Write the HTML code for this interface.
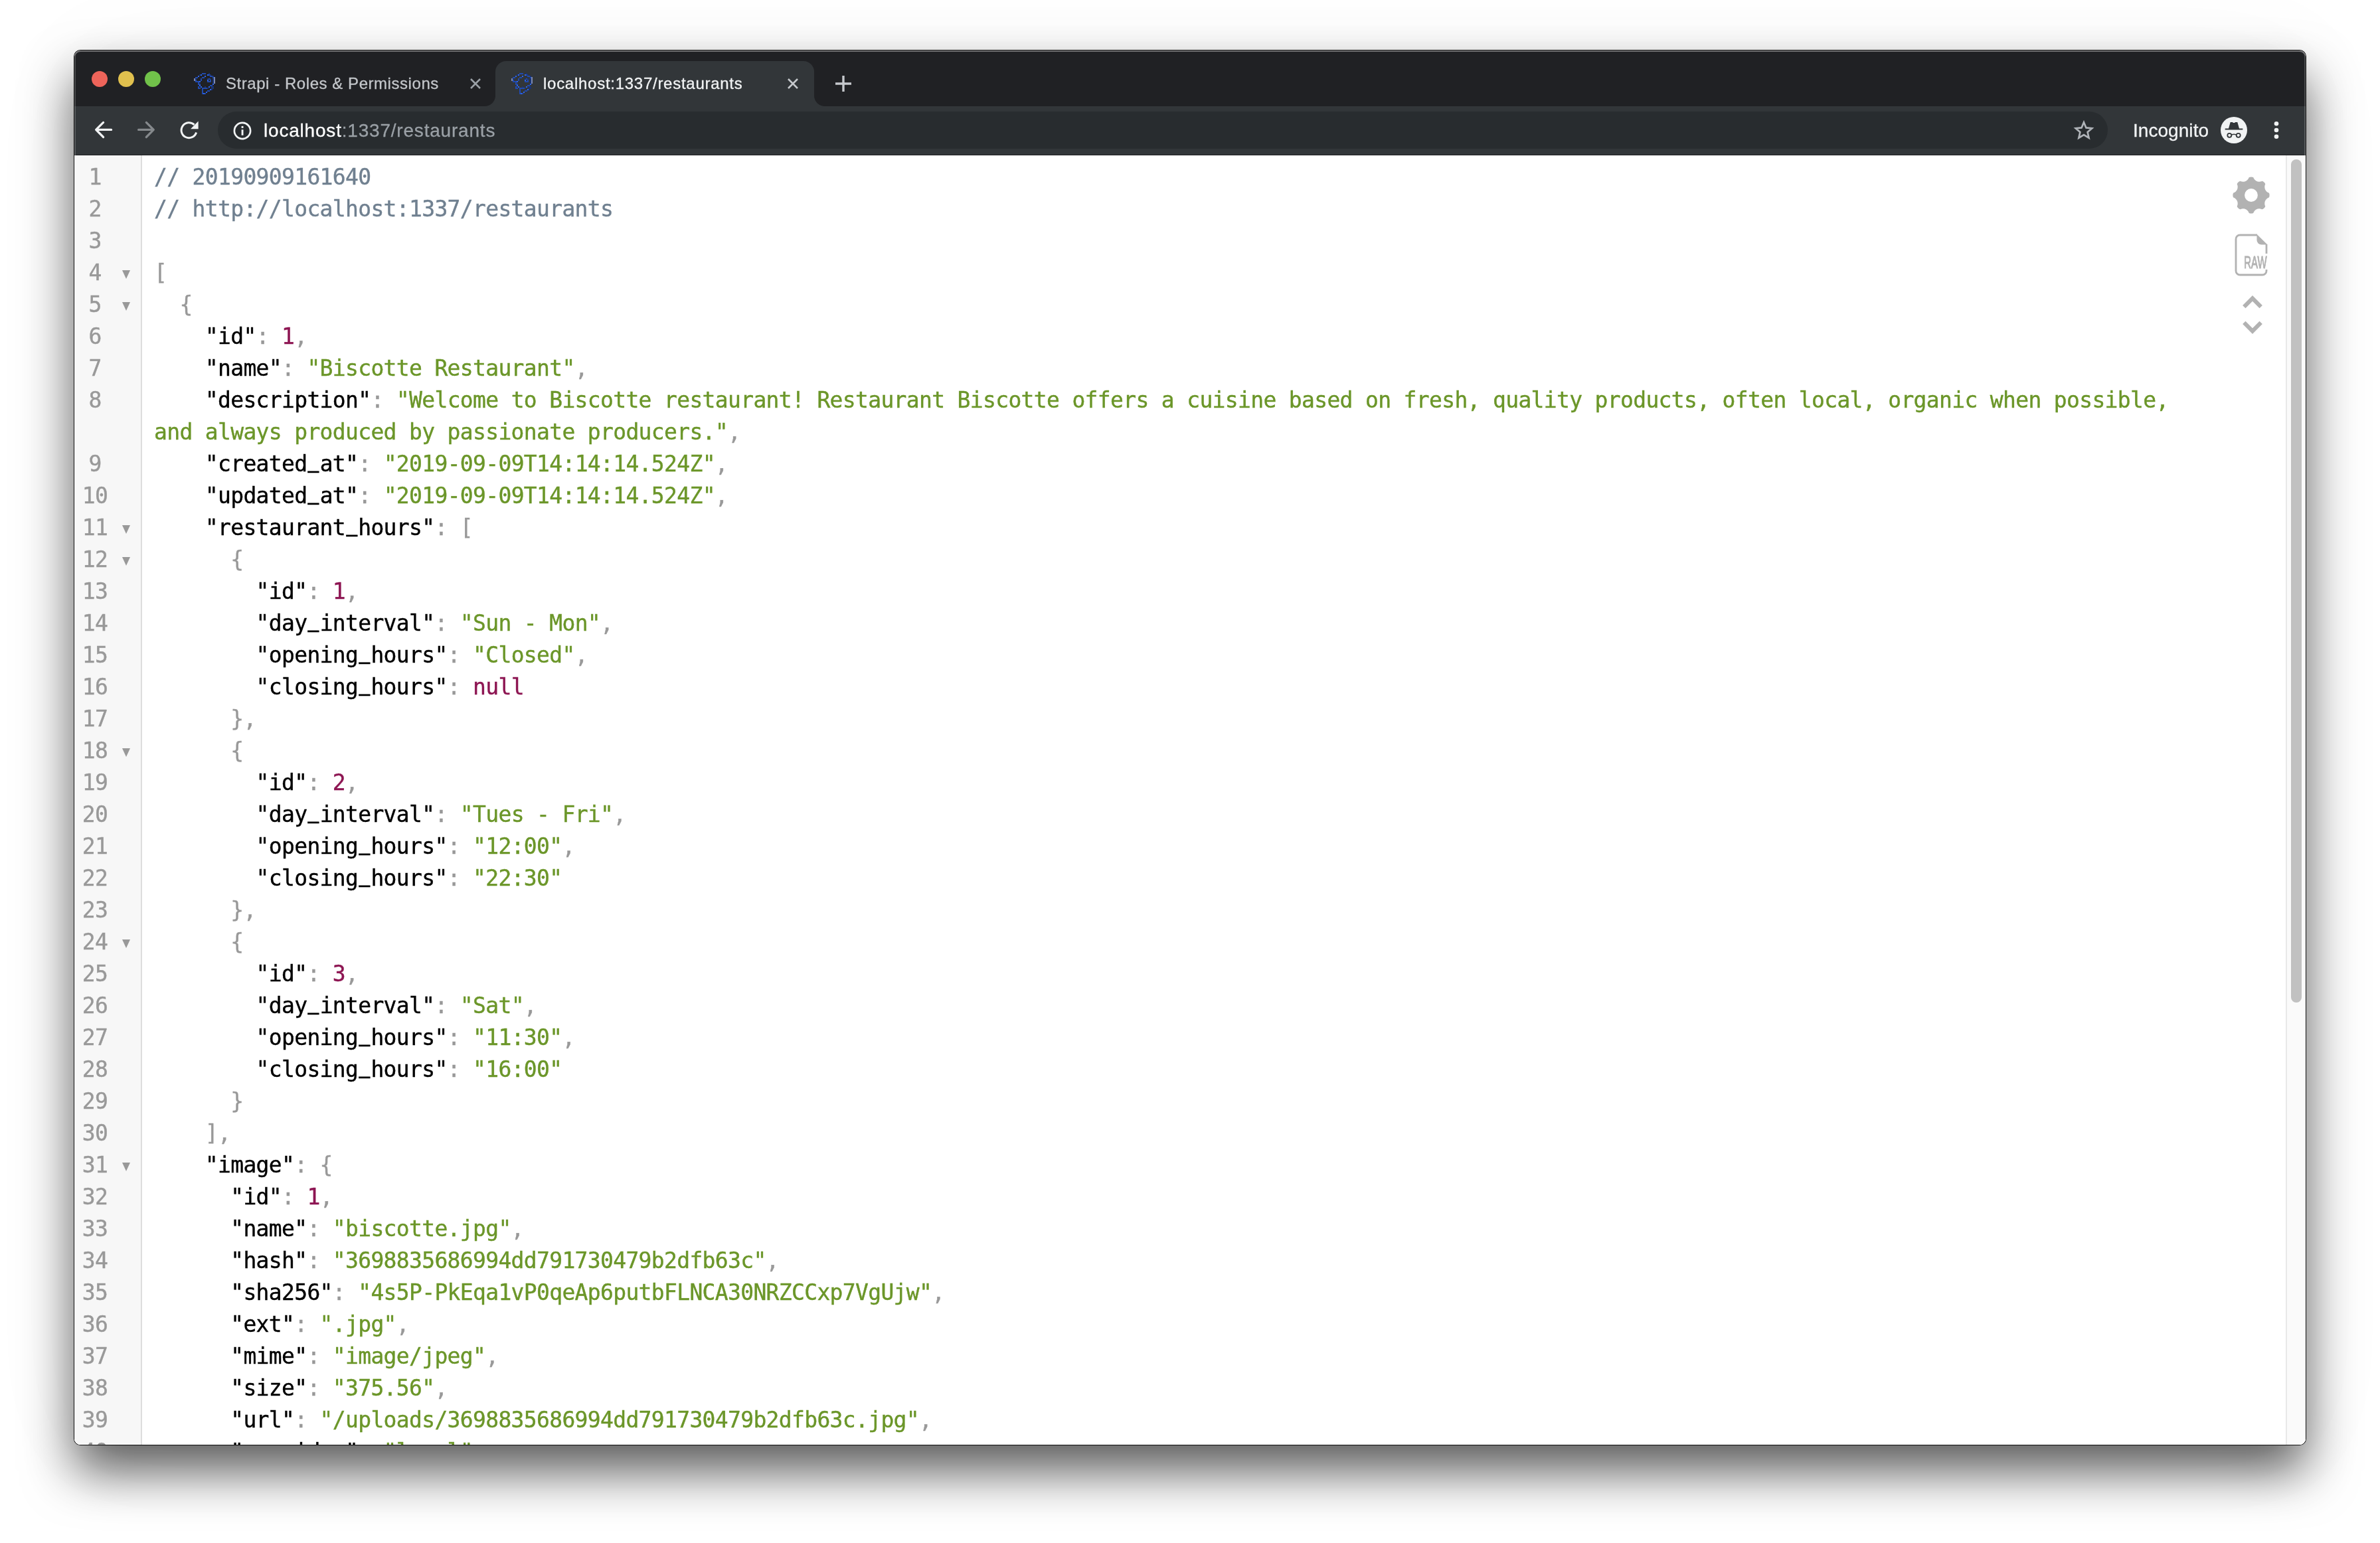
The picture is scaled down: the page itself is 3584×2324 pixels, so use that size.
<!DOCTYPE html>
<html lang="en">
<head>
<meta charset="utf-8">
<title>localhost:1337/restaurants</title>
<style>
html,body{margin:0;padding:0;}
body{width:3584px;height:2324px;background:#fff;position:relative;overflow:hidden;font-family:"Liberation Sans",sans-serif;}
#win{position:absolute;left:112px;top:76px;width:3360px;height:2100px;border-radius:9px;background:#fff;
  box-shadow:0 0 0 1px rgba(0,0,0,.9),0 40px 76px 0 rgba(0,0,0,.638),0 0 170px rgba(0,0,0,.035);}
#clip{position:absolute;left:0;top:0;right:0;bottom:0;border-radius:9px;overflow:hidden;will-change:transform;}
#clip:after{content:"";position:absolute;left:0;top:0;right:0;bottom:0;border-radius:9px;pointer-events:none;
  box-shadow:inset 0 2px 0 rgba(255,255,255,.34),inset 2px 0 0 rgba(255,255,255,.18),inset -2px 0 0 rgba(255,255,255,.18);}
#tabbar{position:absolute;left:0;top:0;width:3360px;height:84px;background:#202124;}
#toolbar{position:absolute;left:0;top:84px;width:3360px;height:74px;background:#323639;box-shadow:inset 0 -1px 0 #1c1d1f;}
.tl{position:absolute;top:31px;width:24px;height:24px;border-radius:50%;}
.tab{position:absolute;top:16px;height:68px;}
.tab.active{background:#323639;border-radius:16px 16px 0 0;}
.tab.active:before,.tab.active:after{content:"";position:absolute;bottom:0;width:16px;height:16px;}
.tab.active:before{left:-16px;background:radial-gradient(circle at 0 0,transparent 15.5px,#323639 16.5px);}
.tab.active:after{right:-16px;background:radial-gradient(circle at 100% 0,transparent 15.5px,#323639 16.5px);}
.tab .fav{position:absolute;left:24px;top:18px;width:32px;height:32px;}
.tab .ttl{position:absolute;left:72px;top:14px;-webkit-text-stroke:.3px;font-size:24px;line-height:40px;white-space:nowrap;}
.tab .cls{position:absolute;top:26px;width:16px;height:16px;}
svg{display:block;overflow:visible;}
#omni{position:absolute;left:216px;top:8px;width:2846px;height:56px;border-radius:28px;background:#282c2f;}
#url{position:absolute;left:69px;top:9px;-webkit-text-stroke:.3px;font-size:28px;line-height:40px;color:#9aa0a6;white-space:nowrap;letter-spacing:.8px;}
#url b{font-weight:normal;color:#fff;}
.ico{position:absolute;}
#incog{position:absolute;left:3100px;letter-spacing:.05px;top:17px;-webkit-text-stroke:.3px;font-size:28px;line-height:40px;color:#f1f3f4;white-space:nowrap;}
#page{position:absolute;left:0;top:158px;width:3360px;height:1942px;background:#fff;overflow:hidden;}
#gutter{position:absolute;left:0;top:0;width:100px;height:100%;background:#f7f7f7;border-right:2px solid #ddd;}
#code{position:absolute;left:0;top:9px;width:3330px;font-family:"DejaVu Sans Mono","Liberation Mono",monospace;font-size:33px;line-height:48px;letter-spacing:-0.668px;-webkit-text-stroke:.4px;}
.row{position:relative;height:48px;white-space:pre;}
.g{position:absolute;left:0;top:0;width:100px;height:48px;color:#999;}
.ln{position:absolute;left:0;width:62px;text-align:center;}
.fd{position:absolute;left:72.3px;top:20px;width:0;height:0;border-left:6.6px solid transparent;border-right:6.6px solid transparent;border-top:13px solid #999;}
.t{position:absolute;left:120px;top:0;}
.u{display:inline-block;transform-origin:50% 100%;transform:translateY(-3.2px) scale(.86,1.6);}
.p{color:#000}.s{color:#6b9629}.n{color:#8d1552}.x{color:#999}.c{color:#708090}
#sbar{position:absolute;right:0;top:0;width:30px;height:100%;background:#fafafa;border-left:2px solid #e8e8e8;box-sizing:border-box;}
#thumb{position:absolute;left:6px;top:6px;width:16px;height:1270px;border-radius:8px;background:#c1c1c1;}
</style>
</head>
<body>
<div id="win"><div id="clip">
  <div id="tabbar">
    <div class="tl" style="left:26px;background:#ee645a;"></div>
    <div class="tl" style="left:66px;background:#e0c04e;"></div>
    <div class="tl" style="left:106px;background:#71c24a;"></div>

    <div class="tab" style="left:156px;width:478px;">
      <svg class="fav" viewBox="0 0 16 16" shape-rendering="crispEdges"><rect x="6" y="0" width="1" height="1" fill="#214aae"/><rect x="7" y="0" width="1" height="1" fill="#214aae"/><rect x="8" y="0" width="1" height="1" fill="#214aae"/><rect x="11" y="0" width="1" height="1" fill="#1b3370"/><rect x="4" y="1" width="1" height="1" fill="#1b3370"/><rect x="5" y="1" width="1" height="1" fill="#2c65ee"/><rect x="10" y="1" width="1" height="1" fill="#2c65ee"/><rect x="11" y="1" width="1" height="1" fill="#214aae"/><rect x="12" y="1" width="1" height="1" fill="#1b3370"/><rect x="3" y="2" width="1" height="1" fill="#2c65ee"/><rect x="8" y="2" width="1" height="1" fill="#2c65ee"/><rect x="12" y="2" width="1" height="1" fill="#214aae"/><rect x="13" y="2" width="1" height="1" fill="#214aae"/><rect x="14" y="2" width="1" height="1" fill="#1b3370"/><rect x="1" y="3" width="1" height="1" fill="#214aae"/><rect x="2" y="3" width="1" height="1" fill="#214aae"/><rect x="6" y="3" width="1" height="1" fill="#214aae"/><rect x="7" y="3" width="1" height="1" fill="#214aae"/><rect x="14" y="3" width="1" height="1" fill="#214aae"/><rect x="15" y="3" width="1" height="1" fill="#7c89b0"/><rect x="0" y="4" width="1" height="1" fill="#7c89b0"/><rect x="1" y="4" width="1" height="1" fill="#1b3370"/><rect x="5" y="4" width="1" height="1" fill="#214aae"/><rect x="10" y="4" width="1" height="1" fill="#1b3370"/><rect x="11" y="4" width="1" height="1" fill="#214aae"/><rect x="12" y="4" width="1" height="1" fill="#1b3370"/><rect x="14" y="4" width="1" height="1" fill="#1b3370"/><rect x="15" y="4" width="1" height="1" fill="#7c89b0"/><rect x="0" y="5" width="1" height="1" fill="#7c89b0"/><rect x="1" y="5" width="1" height="1" fill="#214aae"/><rect x="5" y="5" width="1" height="1" fill="#214aae"/><rect x="10" y="5" width="1" height="1" fill="#2c65ee"/><rect x="12" y="5" width="1" height="1" fill="#214aae"/><rect x="14" y="5" width="1" height="1" fill="#1b3370"/><rect x="15" y="5" width="1" height="1" fill="#7c89b0"/><rect x="1" y="6" width="1" height="1" fill="#214aae"/><rect x="2" y="6" width="1" height="1" fill="#214aae"/><rect x="3" y="6" width="1" height="1" fill="#214aae"/><rect x="4" y="6" width="1" height="1" fill="#2c65ee"/><rect x="10" y="6" width="1" height="1" fill="#214aae"/><rect x="11" y="6" width="1" height="1" fill="#214aae"/><rect x="12" y="6" width="1" height="1" fill="#214aae"/><rect x="14" y="6" width="1" height="1" fill="#1b3370"/><rect x="15" y="6" width="1" height="1" fill="#7c89b0"/><rect x="3" y="7" width="1" height="1" fill="#214aae"/><rect x="14" y="7" width="1" height="1" fill="#1b3370"/><rect x="15" y="7" width="1" height="1" fill="#7c89b0"/><rect x="3" y="8" width="1" height="1" fill="#214aae"/><rect x="4" y="8" width="1" height="1" fill="#214aae"/><rect x="14" y="8" width="1" height="1" fill="#2c65ee"/><rect x="4" y="9" width="1" height="1" fill="#2c65ee"/><rect x="12" y="9" width="1" height="1" fill="#214aae"/><rect x="13" y="9" width="1" height="1" fill="#214aae"/><rect x="3" y="10" width="1" height="1" fill="#214aae"/><rect x="5" y="10" width="1" height="1" fill="#2c65ee"/><rect x="8" y="10" width="1" height="1" fill="#1b3370"/><rect x="11" y="10" width="1" height="1" fill="#2c65ee"/><rect x="13" y="10" width="1" height="1" fill="#1b3370"/><rect x="14" y="10" width="1" height="1" fill="#1b3370"/><rect x="3" y="11" width="1" height="1" fill="#214aae"/><rect x="4" y="11" width="1" height="1" fill="#214aae"/><rect x="6" y="11" width="1" height="1" fill="#214aae"/><rect x="7" y="11" width="1" height="1" fill="#214aae"/><rect x="8" y="11" width="1" height="1" fill="#214aae"/><rect x="9" y="11" width="1" height="1" fill="#214aae"/><rect x="10" y="11" width="1" height="1" fill="#1b3370"/><rect x="13" y="11" width="1" height="1" fill="#1b3370"/><rect x="14" y="11" width="1" height="1" fill="#1b3370"/><rect x="6" y="12" width="1" height="1" fill="#214aae"/><rect x="12" y="12" width="1" height="1" fill="#2c65ee"/><rect x="13" y="12" width="1" height="1" fill="#1b3370"/><rect x="6" y="13" width="1" height="1" fill="#214aae"/><rect x="10" y="13" width="1" height="1" fill="#214aae"/><rect x="11" y="13" width="1" height="1" fill="#214aae"/><rect x="6" y="14" width="1" height="1" fill="#214aae"/><rect x="9" y="14" width="1" height="1" fill="#2c65ee"/><rect x="6" y="15" width="1" height="1" fill="#214aae"/><rect x="7" y="15" width="1" height="1" fill="#2c65ee"/><rect x="8" y="15" width="1" height="1" fill="#214aae"/></svg>
      <div class="ttl" style="color:#c3c6ca;letter-spacing:.55px">Strapi - Roles &amp; Permissions</div>
      <svg class="cls" style="left:440px" viewBox="0 0 16 16"><path d="M1 1L15 15M15 1L1 15" stroke="#9aa0a6" stroke-width="2.6" fill="none"/></svg>
    </div>
    <div class="tab active" style="left:634px;width:480px;">
      <svg class="fav" viewBox="0 0 16 16" shape-rendering="crispEdges"><rect x="6" y="0" width="1" height="1" fill="#214aae"/><rect x="7" y="0" width="1" height="1" fill="#214aae"/><rect x="8" y="0" width="1" height="1" fill="#214aae"/><rect x="11" y="0" width="1" height="1" fill="#1b3370"/><rect x="4" y="1" width="1" height="1" fill="#1b3370"/><rect x="5" y="1" width="1" height="1" fill="#2c65ee"/><rect x="10" y="1" width="1" height="1" fill="#2c65ee"/><rect x="11" y="1" width="1" height="1" fill="#214aae"/><rect x="12" y="1" width="1" height="1" fill="#1b3370"/><rect x="3" y="2" width="1" height="1" fill="#2c65ee"/><rect x="8" y="2" width="1" height="1" fill="#2c65ee"/><rect x="12" y="2" width="1" height="1" fill="#214aae"/><rect x="13" y="2" width="1" height="1" fill="#214aae"/><rect x="14" y="2" width="1" height="1" fill="#1b3370"/><rect x="1" y="3" width="1" height="1" fill="#214aae"/><rect x="2" y="3" width="1" height="1" fill="#214aae"/><rect x="6" y="3" width="1" height="1" fill="#214aae"/><rect x="7" y="3" width="1" height="1" fill="#214aae"/><rect x="14" y="3" width="1" height="1" fill="#214aae"/><rect x="15" y="3" width="1" height="1" fill="#7c89b0"/><rect x="0" y="4" width="1" height="1" fill="#7c89b0"/><rect x="1" y="4" width="1" height="1" fill="#1b3370"/><rect x="5" y="4" width="1" height="1" fill="#214aae"/><rect x="10" y="4" width="1" height="1" fill="#1b3370"/><rect x="11" y="4" width="1" height="1" fill="#214aae"/><rect x="12" y="4" width="1" height="1" fill="#1b3370"/><rect x="14" y="4" width="1" height="1" fill="#1b3370"/><rect x="15" y="4" width="1" height="1" fill="#7c89b0"/><rect x="0" y="5" width="1" height="1" fill="#7c89b0"/><rect x="1" y="5" width="1" height="1" fill="#214aae"/><rect x="5" y="5" width="1" height="1" fill="#214aae"/><rect x="10" y="5" width="1" height="1" fill="#2c65ee"/><rect x="12" y="5" width="1" height="1" fill="#214aae"/><rect x="14" y="5" width="1" height="1" fill="#1b3370"/><rect x="15" y="5" width="1" height="1" fill="#7c89b0"/><rect x="1" y="6" width="1" height="1" fill="#214aae"/><rect x="2" y="6" width="1" height="1" fill="#214aae"/><rect x="3" y="6" width="1" height="1" fill="#214aae"/><rect x="4" y="6" width="1" height="1" fill="#2c65ee"/><rect x="10" y="6" width="1" height="1" fill="#214aae"/><rect x="11" y="6" width="1" height="1" fill="#214aae"/><rect x="12" y="6" width="1" height="1" fill="#214aae"/><rect x="14" y="6" width="1" height="1" fill="#1b3370"/><rect x="15" y="6" width="1" height="1" fill="#7c89b0"/><rect x="3" y="7" width="1" height="1" fill="#214aae"/><rect x="14" y="7" width="1" height="1" fill="#1b3370"/><rect x="15" y="7" width="1" height="1" fill="#7c89b0"/><rect x="3" y="8" width="1" height="1" fill="#214aae"/><rect x="4" y="8" width="1" height="1" fill="#214aae"/><rect x="14" y="8" width="1" height="1" fill="#2c65ee"/><rect x="4" y="9" width="1" height="1" fill="#2c65ee"/><rect x="12" y="9" width="1" height="1" fill="#214aae"/><rect x="13" y="9" width="1" height="1" fill="#214aae"/><rect x="3" y="10" width="1" height="1" fill="#214aae"/><rect x="5" y="10" width="1" height="1" fill="#2c65ee"/><rect x="8" y="10" width="1" height="1" fill="#1b3370"/><rect x="11" y="10" width="1" height="1" fill="#2c65ee"/><rect x="13" y="10" width="1" height="1" fill="#1b3370"/><rect x="14" y="10" width="1" height="1" fill="#1b3370"/><rect x="3" y="11" width="1" height="1" fill="#214aae"/><rect x="4" y="11" width="1" height="1" fill="#214aae"/><rect x="6" y="11" width="1" height="1" fill="#214aae"/><rect x="7" y="11" width="1" height="1" fill="#214aae"/><rect x="8" y="11" width="1" height="1" fill="#214aae"/><rect x="9" y="11" width="1" height="1" fill="#214aae"/><rect x="10" y="11" width="1" height="1" fill="#1b3370"/><rect x="13" y="11" width="1" height="1" fill="#1b3370"/><rect x="14" y="11" width="1" height="1" fill="#1b3370"/><rect x="6" y="12" width="1" height="1" fill="#214aae"/><rect x="12" y="12" width="1" height="1" fill="#2c65ee"/><rect x="13" y="12" width="1" height="1" fill="#1b3370"/><rect x="6" y="13" width="1" height="1" fill="#214aae"/><rect x="10" y="13" width="1" height="1" fill="#214aae"/><rect x="11" y="13" width="1" height="1" fill="#214aae"/><rect x="6" y="14" width="1" height="1" fill="#214aae"/><rect x="9" y="14" width="1" height="1" fill="#2c65ee"/><rect x="6" y="15" width="1" height="1" fill="#214aae"/><rect x="7" y="15" width="1" height="1" fill="#2c65ee"/><rect x="8" y="15" width="1" height="1" fill="#214aae"/></svg>
      <div class="ttl" style="color:#f1f3f4;letter-spacing:.73px">localhost:1337/restaurants</div>
      <svg class="cls" style="left:440px" viewBox="0 0 16 16"><path d="M1 1L15 15M15 1L1 15" stroke="#c6c9cd" stroke-width="2.6" fill="none"/></svg>
    </div>
    <svg class="ico" style="left:1146px;top:38px;width:24px;height:24px" viewBox="0 0 24 24"><path d="M12 0V24M0 12H24" stroke="#c6c9cd" stroke-width="3.4" fill="none"/></svg>
  </div>

  <div id="toolbar">
    <!-- back -->
    <svg class="ico" style="left:0;top:0;width:10px;height:10px" viewBox="0 0 10 10"><path d="M43.6 24.4L32.6 35.45L43.6 46.5M33 35.45H55.6" stroke="#f1f3f4" stroke-width="3.2" fill="none" stroke-linecap="round" stroke-linejoin="round"/><path d="M108.3 24.4L119.3 35.45L108.3 46.5M118.9 35.45H96.6" stroke="#85898c" stroke-width="3.2" fill="none" stroke-linecap="round" stroke-linejoin="round"/></svg>
    <!-- reload -->
    <svg class="ico" style="left:158.5px;top:22px;width:30px;height:28px" viewBox="0 0 30 28"><path d="M24.6 17.5A11.5 11.5 0 1 1 21.6 5.9" stroke="#f1f3f4" stroke-width="3" fill="none"/><path d="M27.6 0.6V12.2H16z" fill="#f1f3f4"/></svg>
    <div id="omni">
      <svg class="ico" style="left:22.6px;top:14.6px;width:28px;height:28px" viewBox="0 0 28 28"><circle cx="14" cy="14" r="12.1" stroke="#f1f3f4" stroke-width="2.7" fill="none"/><rect x="12.6" y="12.2" width="2.9" height="8.6" fill="#f1f3f4"/><rect x="12.6" y="6.9" width="2.9" height="3" fill="#f1f3f4"/></svg>
      <div id="url"><b>localhost</b>:1337/restaurants</div>
      <svg class="ico" style="left:2794px;top:12px;width:32px;height:32px" viewBox="0 0 24 24"><path d="M12 3.2l2.6 6.1 6.6.6-5 4.4 1.5 6.5L12 17.3 6.3 20.8l1.5-6.5-5-4.4 6.6-.6z" stroke="#b0b4b9" stroke-width="2" fill="none" stroke-linejoin="miter"/></svg>
    </div>
    <div id="incog">Incognito</div>
    <svg class="ico" style="left:3232px;top:16px;width:40px;height:40px" viewBox="0 0 40 40"><circle cx="20" cy="20" r="20" fill="#f1f3f4"/><path d="M14.7 8h3.1l1.3 1h1.8l1.3-1h3.1l2.7 9.4h5.3v2H6.7v-2h5.3z" fill="#323639"/><circle cx="13.3" cy="27.8" r="3" stroke="#323639" stroke-width="1.8" fill="none"/><circle cx="26.7" cy="27.8" r="3" stroke="#323639" stroke-width="1.8" fill="none"/><path d="M16.6 27q3.4-1.5 6.8 0" stroke="#323639" stroke-width="1.6" fill="none"/></svg>
    <svg class="ico" style="left:3312px;top:22px;width:8px;height:28px" viewBox="0 0 8 28"><circle cx="4" cy="4.2" r="3.3" fill="#f1f3f4"/><circle cx="4" cy="14" r="3.3" fill="#f1f3f4"/><circle cx="4" cy="23.8" r="3.3" fill="#f1f3f4"/></svg>
  </div>

  <div id="page">
    <div id="gutter"></div>
    <div id="code">
<div class="row"><div class="g"><span class="ln">1</span></div><div class="t"><span class="c">// 20190909161640</span></div></div>
<div class="row"><div class="g"><span class="ln">2</span></div><div class="t"><span class="c">// http://localhost:1337/restaurants</span></div></div>
<div class="row"><div class="g"><span class="ln">3</span></div><div class="t"></div></div>
<div class="row"><div class="g"><span class="ln">4</span><span class="fd"></span></div><div class="t"><span class="x">[</span></div></div>
<div class="row"><div class="g"><span class="ln">5</span><span class="fd"></span></div><div class="t">  <span class="x">{</span></div></div>
<div class="row"><div class="g"><span class="ln">6</span></div><div class="t">    <span class="p">"id"</span><span class="x">: </span><span class="n">1</span><span class="x">,</span></div></div>
<div class="row"><div class="g"><span class="ln">7</span></div><div class="t">    <span class="p">"name"</span><span class="x">: </span><span class="s">"Biscotte Restaurant"</span><span class="x">,</span></div></div>
<div class="row"><div class="g"><span class="ln">8</span></div><div class="t">    <span class="p">"description"</span><span class="x">: </span><span class="s">"Welcome to Biscotte restaurant! Restaurant Biscotte offers a cuisine based on fresh, quality products, often local, organic when possible,</span></div></div>
<div class="row"><div class="g"><span class="ln"></span></div><div class="t"><span class="s">and always produced by passionate producers."</span><span class="x">,</span></div></div>
<div class="row"><div class="g"><span class="ln">9</span></div><div class="t">    <span class="p">"created<span class="u">_</span>at"</span><span class="x">: </span><span class="s">"2019-09-09T14:14:14.524Z"</span><span class="x">,</span></div></div>
<div class="row"><div class="g"><span class="ln">10</span></div><div class="t">    <span class="p">"updated<span class="u">_</span>at"</span><span class="x">: </span><span class="s">"2019-09-09T14:14:14.524Z"</span><span class="x">,</span></div></div>
<div class="row"><div class="g"><span class="ln">11</span><span class="fd"></span></div><div class="t">    <span class="p">"restaurant<span class="u">_</span>hours"</span><span class="x">: [</span></div></div>
<div class="row"><div class="g"><span class="ln">12</span><span class="fd"></span></div><div class="t">      <span class="x">{</span></div></div>
<div class="row"><div class="g"><span class="ln">13</span></div><div class="t">        <span class="p">"id"</span><span class="x">: </span><span class="n">1</span><span class="x">,</span></div></div>
<div class="row"><div class="g"><span class="ln">14</span></div><div class="t">        <span class="p">"day<span class="u">_</span>interval"</span><span class="x">: </span><span class="s">"Sun - Mon"</span><span class="x">,</span></div></div>
<div class="row"><div class="g"><span class="ln">15</span></div><div class="t">        <span class="p">"opening<span class="u">_</span>hours"</span><span class="x">: </span><span class="s">"Closed"</span><span class="x">,</span></div></div>
<div class="row"><div class="g"><span class="ln">16</span></div><div class="t">        <span class="p">"closing<span class="u">_</span>hours"</span><span class="x">: </span><span class="n">null</span></div></div>
<div class="row"><div class="g"><span class="ln">17</span></div><div class="t">      <span class="x">},</span></div></div>
<div class="row"><div class="g"><span class="ln">18</span><span class="fd"></span></div><div class="t">      <span class="x">{</span></div></div>
<div class="row"><div class="g"><span class="ln">19</span></div><div class="t">        <span class="p">"id"</span><span class="x">: </span><span class="n">2</span><span class="x">,</span></div></div>
<div class="row"><div class="g"><span class="ln">20</span></div><div class="t">        <span class="p">"day<span class="u">_</span>interval"</span><span class="x">: </span><span class="s">"Tues - Fri"</span><span class="x">,</span></div></div>
<div class="row"><div class="g"><span class="ln">21</span></div><div class="t">        <span class="p">"opening<span class="u">_</span>hours"</span><span class="x">: </span><span class="s">"12:00"</span><span class="x">,</span></div></div>
<div class="row"><div class="g"><span class="ln">22</span></div><div class="t">        <span class="p">"closing<span class="u">_</span>hours"</span><span class="x">: </span><span class="s">"22:30"</span></div></div>
<div class="row"><div class="g"><span class="ln">23</span></div><div class="t">      <span class="x">},</span></div></div>
<div class="row"><div class="g"><span class="ln">24</span><span class="fd"></span></div><div class="t">      <span class="x">{</span></div></div>
<div class="row"><div class="g"><span class="ln">25</span></div><div class="t">        <span class="p">"id"</span><span class="x">: </span><span class="n">3</span><span class="x">,</span></div></div>
<div class="row"><div class="g"><span class="ln">26</span></div><div class="t">        <span class="p">"day<span class="u">_</span>interval"</span><span class="x">: </span><span class="s">"Sat"</span><span class="x">,</span></div></div>
<div class="row"><div class="g"><span class="ln">27</span></div><div class="t">        <span class="p">"opening<span class="u">_</span>hours"</span><span class="x">: </span><span class="s">"11:30"</span><span class="x">,</span></div></div>
<div class="row"><div class="g"><span class="ln">28</span></div><div class="t">        <span class="p">"closing<span class="u">_</span>hours"</span><span class="x">: </span><span class="s">"16:00"</span></div></div>
<div class="row"><div class="g"><span class="ln">29</span></div><div class="t">      <span class="x">}</span></div></div>
<div class="row"><div class="g"><span class="ln">30</span></div><div class="t">    <span class="x">],</span></div></div>
<div class="row"><div class="g"><span class="ln">31</span><span class="fd"></span></div><div class="t">    <span class="p">"image"</span><span class="x">: {</span></div></div>
<div class="row"><div class="g"><span class="ln">32</span></div><div class="t">      <span class="p">"id"</span><span class="x">: </span><span class="n">1</span><span class="x">,</span></div></div>
<div class="row"><div class="g"><span class="ln">33</span></div><div class="t">      <span class="p">"name"</span><span class="x">: </span><span class="s">"biscotte.jpg"</span><span class="x">,</span></div></div>
<div class="row"><div class="g"><span class="ln">34</span></div><div class="t">      <span class="p">"hash"</span><span class="x">: </span><span class="s">"3698835686994dd791730479b2dfb63c"</span><span class="x">,</span></div></div>
<div class="row"><div class="g"><span class="ln">35</span></div><div class="t">      <span class="p">"sha256"</span><span class="x">: </span><span class="s">"4s5P-PkEqa1vP0qeAp6putbFLNCA30NRZCCxp7VgUjw"</span><span class="x">,</span></div></div>
<div class="row"><div class="g"><span class="ln">36</span></div><div class="t">      <span class="p">"ext"</span><span class="x">: </span><span class="s">".jpg"</span><span class="x">,</span></div></div>
<div class="row"><div class="g"><span class="ln">37</span></div><div class="t">      <span class="p">"mime"</span><span class="x">: </span><span class="s">"image/jpeg"</span><span class="x">,</span></div></div>
<div class="row"><div class="g"><span class="ln">38</span></div><div class="t">      <span class="p">"size"</span><span class="x">: </span><span class="s">"375.56"</span><span class="x">,</span></div></div>
<div class="row"><div class="g"><span class="ln">39</span></div><div class="t">      <span class="p">"url"</span><span class="x">: </span><span class="s">"/uploads/3698835686994dd791730479b2dfb63c.jpg"</span><span class="x">,</span></div></div>
<div class="row"><div class="g"><span class="ln">40</span></div><div class="t">      <span class="p">"provider"</span><span class="x">: </span><span class="s">"local"</span><span class="x">,</span></div></div>
    </div>
    <!-- gear -->
    <svg class="ico" style="left:3249.8px;top:32.1px;width:56px;height:56px" viewBox="-28 -28 56 56"><path fill-rule="evenodd" fill="#b2b2b2" d="M-3.90 -25.30A3.9 2.3 0 0 1 3.90 -25.30A10.5 10.5 0 0 0 15.13 -20.65L15.13 -20.65A3.9 2.3 45 0 1 20.65 -15.13A10.5 10.5 0 0 0 25.30 -3.90L25.30 -3.90A3.9 2.3 90 0 1 25.30 3.90A10.5 10.5 0 0 0 20.65 15.13L20.65 15.13A3.9 2.3 135 0 1 15.13 20.65A10.5 10.5 0 0 0 3.90 25.30L3.90 25.30A3.9 2.3 180 0 1 -3.90 25.30A10.5 10.5 0 0 0 -15.13 20.65L-15.13 20.65A3.9 2.3 225 0 1 -20.65 15.13A10.5 10.5 0 0 0 -25.30 3.90L-25.30 3.90A3.9 2.3 270 0 1 -25.30 -3.90A10.5 10.5 0 0 0 -20.65 -15.13L-20.65 -15.13A3.9 2.3 315 0 1 -15.13 -20.65A10.5 10.5 0 0 0 -3.90 -25.30ZM9.9 0A9.9 9.9 0 1 0 -9.9 0A9.9 9.9 0 1 0 9.9 0Z"/></svg>
    <!-- raw -->
    <svg class="ico" style="left:3253px;top:118px;width:50px;height:64px" viewBox="0 0 50 64"><path d="M34 2H8a6 6 0 0 0-6 6v48a6 6 0 0 0 6 6h34a6 6 0 0 0 6-6v-2M48 30V16" stroke="#b2b2b2" stroke-width="2.8" fill="none"/><path d="M33.5 0.8v8.8a7 7 0 0 0 7 7h9z" fill="#b2b2b2"/><text transform="translate(14.2 51.6) scale(.565 1)" font-family="Liberation Sans,sans-serif" font-size="26.5" fill="#b2b2b2" stroke="#b2b2b2" stroke-width="1.1">RAW</text></svg>
    <!-- chevrons -->
    <svg class="ico" style="left:0;top:0;width:10px;height:10px" viewBox="0 0 10 10"><path d="M3267.3 228.1L3280 215.4L3292.7 228.1M3267.3 251.9L3280 264.6L3292.7 251.9" stroke="#b2b2b2" stroke-width="6.2" fill="none"/></svg>
    <div id="sbar"><div id="thumb"></div></div>
  </div>
</div></div>

</body>
</html>
